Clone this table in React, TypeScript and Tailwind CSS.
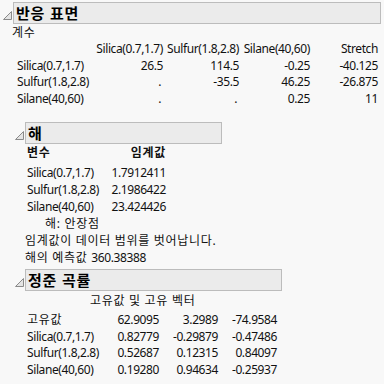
import React from "react";

const coefRows = [
  ["Silica(0.7,1.7)", "26.5", "114.5", "-0.25", "-40.125"],
  ["Sulfur(1.8,2.8)", ".", "-35.5", "46.25", "-26.875"],
  ["Silane(40,60)", ".", ".", "0.25", "11"],
];

const solution = [
  ["Silica(0.7,1.7)", "1.7912411"],
  ["Sulfur(1.8,2.8)", "2.1986422"],
  ["Silane(40,60)", "23.424426"],
];

const canonical = [
  ["고유값", "62.9095", "3.2989", "-74.9584"],
  ["Silica(0.7,1.7)", "0.82779", "-0.29879", "-0.47486"],
  ["Sulfur(1.8,2.8)", "0.52687", "0.12315", "0.84097"],
  ["Silane(40,60)", "0.19280", "0.94634", "-0.25937"],
];

function Disclosure() {
  return (
    <div className="w-[13px] h-[22px] flex items-center">
      <svg width="13" height="22" viewBox="0 0 13 22">
        <path d="M3.5 17.5 L11.5 17.5 L11.5 9.5 Z" fill="#e4e4e4" stroke="#8a8a8a" strokeWidth="1" />
      </svg>
    </div>
  );
}

function Header({ title, width }: { title: string; width: string }) {
  return (
    <div className="flex items-start">
      <Disclosure />
      <div className={`${width} h-[22px] border border-[#bcbcbc] bg-[#ebebeb] pl-[2px] flex items-center text-[15px] font-bold leading-none tracking-[0.8px] text-black`}>
        {title}
      </div>
    </div>
  );
}

// missing values sit a touch left of the number edge
const cell = (v: string) => (v === "." ? "pr-[2px]" : "");
const ko = "tracking-[0.7px]";

export default function App() {
  return (
    <div className="w-[384px] h-[384px] overflow-hidden bg-[#f8f8f8] text-[12px] tracking-[-0.4px] text-[#111] font-['Noto_Sans','Noto_Sans_CJK_KR',sans-serif]">
      {/* 반응 표면 */}
      <div className="pt-[2px]">
        <Header title="반응 표면" width="w-[368px]" />
        <div className={`pl-[12px] h-[17px] leading-[17px] ${ko}`}>계수</div>
        <div className="pl-[17px] grid grid-cols-[72px_74px_76px_71px_68px] auto-rows-[16.5px] leading-[16.5px]">
          <div />
          <div className="text-right whitespace-nowrap">Silica(0.7,1.7)</div>
          <div className="text-right whitespace-nowrap">Sulfur(1.8,2.8)</div>
          <div className="text-right whitespace-nowrap">Silane(40,60)</div>
          <div className="text-right">Stretch</div>
          {coefRows.map((r) => (
            <React.Fragment key={r[0]}>
              <div className="whitespace-nowrap">{r[0]}</div>
              {r.slice(1).map((v, i) => (
                <div key={i} className={`text-right ${cell(v)}`}>{v}</div>
              ))}
            </React.Fragment>
          ))}
        </div>
      </div>

      {/* 해 */}
      <div className="mt-[15px] pl-[12px]">
        <Header title="해" width="w-[197px]" />
        <div className="pl-[15px] mt-[1px]">
          <div className={`grid grid-cols-[80px_59px] h-[16px] leading-[16px] font-bold ${ko}`}>
            <div>변수</div>
            <div className="text-right">임계값</div>
          </div>
          <div className="mt-[3px] grid grid-cols-[80px_59px] auto-rows-[17px] leading-[17px]">
            {solution.map((r) => (
              <React.Fragment key={r[0]}>
                <div className="whitespace-nowrap">{r[0]}</div>
                <div className="text-right">{r[1]}</div>
              </React.Fragment>
            ))}
          </div>
          <div className={`pl-[18px] h-[17px] leading-[17px] ${ko}`}>해: 안장점</div>
        </div>
        <div className={`pl-[13px] h-[17px] leading-[17px] ${ko}`}>임계값이 데이터 범위를 벗어납니다.</div>
        <div className="pl-[13px] h-[17px] leading-[17px]">
          <span className={ko}>해의 예측값 </span>360.38388
        </div>
      </div>

      {/* 정준 곡률 */}
      <div className="mt-[3px] pl-[12px]">
        <Header title="정준 곡률" width="w-[257px]" />
        <div className={`pl-[78px] h-[16px] leading-[16px] mt-[2px] ${ko}`}>고유값 및 고유 벡터</div>
        <div className="pl-[15px] mt-[3px] grid grid-cols-[72px_60px_59px_59px] auto-rows-[16.5px] leading-[16.5px]">
          {canonical.map((r) => (
            <React.Fragment key={r[0]}>
              <div className={`whitespace-nowrap ${r[0] === "고유값" ? ko : ""}`}>{r[0]}</div>
              {r.slice(1).map((v, i) => (
                <div key={i} className="text-right">{v}</div>
              ))}
            </React.Fragment>
          ))}
        </div>
      </div>
    </div>
  );
}
